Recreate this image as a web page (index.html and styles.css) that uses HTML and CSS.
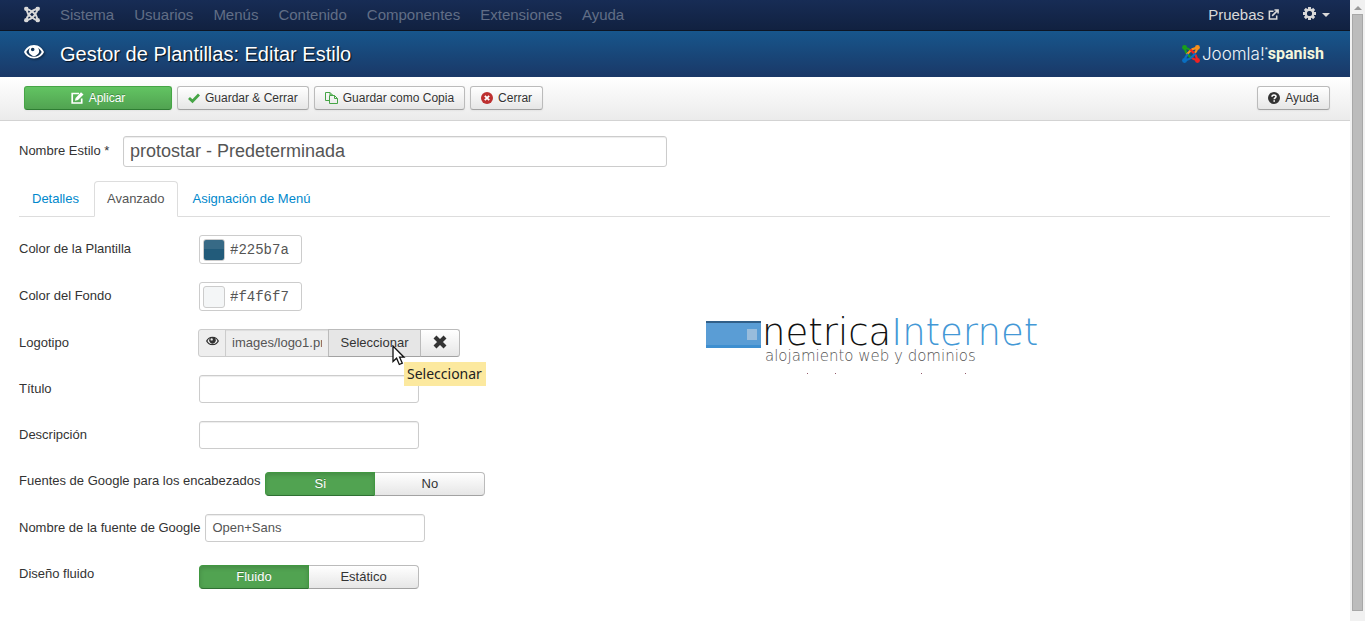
FILE: index.html
```html
<!DOCTYPE html>
<html lang="es">
<head>
<meta charset="utf-8">
<title>Gestor de Plantillas: Editar Estilo</title>
<link rel="stylesheet" href="styles.css">
</head>
<body>
<svg class="defs" aria-hidden="true">
  <symbol id="arm" viewBox="0 0 24 24">
    <circle cx="3.4" cy="3.4" r="3.3" fill="currentColor"/>
    <path d="M3.500 3.500C5 8 4.500 10 7.500 12.500L13 18M4 4C8.500 4 9.500 5.500 12 8" fill="none" stroke="currentColor" stroke-width="2.900"/>
  </symbol>
  <symbol id="eye" viewBox="0 0 20 14">
    <path fill="currentColor" fill-rule="evenodd" d="M10 0C5 0 1.500 3.500 0 7c1.500 3.500 5 6.500 10 6.500S18.500 10.500 20 7C18.500 3.500 15 0 10 0zM10 11.800C6.300 11.800 3.700 9.800 2.300 7 3.200 5.200 4.500 3.700 6 2.900a5 5 0 1 0 8 0c1.500.8 2.800 2.300 3.700 4.100C16.300 9.800 13.700 11.800 10 11.800zM8.700 2.700a1.800 1.800 0 1 1 0 3.600 1.800 1.800 0 0 1 0-3.600z"/>
  </symbol>
</svg>
<div class="window">
  <div class="page">
    <nav class="navbar">
      <a class="brand" href="#" aria-label="Joomla">
        <svg width="17" height="17" viewBox="0 0 24 24"><use href="#arm"/><use href="#arm" transform="rotate(90 12 12)"/><use href="#arm" transform="rotate(180 12 12)"/><use href="#arm" transform="rotate(270 12 12)"/></svg>
      </a>
      <a href="#">Sistema</a><a href="#">Usuarios</a><a href="#">Menús</a><a href="#">Contenido</a><a href="#">Componentes</a><a href="#">Extensiones</a><a href="#">Ayuda</a>
      <a class="site" href="#">Pruebas
        <svg width="11" height="11" viewBox="0 0 12 12" fill="none" stroke="currentColor" stroke-width="1.700"><path d="M6 2.500H1.500v8.500h8V7M4.500 7.500L10.500 1.500M7 1h4v4"/></svg>
      </a>
      <button class="gear" aria-label="Opciones">
        <svg width="13" height="13" viewBox="0 0 14 14"><circle cx="7" cy="7" r="4" fill="none" stroke="currentColor" stroke-width="2.600"/><path d="M7 0v3M7 11v3M0 7h3M11 7h3M2 2l2 2M10 10l2 2M12 2l-2 2M4 10l-2 2" stroke="currentColor" stroke-width="3.200"/><circle cx="7" cy="7" r="2.500" fill="#142748"/></svg>
        <span class="caret"></span>
      </button>
    </nav>
    <header class="header">
      <svg class="head-eye" width="20" height="14"><use href="#eye"/></svg>
      <h1>Gestor de Plantillas: Editar Estilo</h1>
      <a class="logo" href="#">
        <svg width="18" height="18" viewBox="0 0 24 24"><g color="#1aa01a"><use href="#arm"/></g><g color="#f9901c"><use href="#arm" transform="rotate(90 12 12)"/></g><g color="#f02222"><use href="#arm" transform="rotate(180 12 12)"/></g><g color="#0a6fc2"><use href="#arm" transform="rotate(270 12 12)"/></g></svg>
        <span class="logo-name">Joomla!</span><sup>*</sup><b>spanish</b>
      </a>
    </header>
    <div class="toolbar">
      <button class="btn success"><svg width="13" height="12" viewBox="0 0 13 12"><path d="M8 1.500H1.200v9.500h9.500V6.500" fill="none" stroke="currentColor" stroke-width="1.700"/><path d="M4 8.700l.6-2.700L10 .3 12.500 2.500 7 8z" fill="currentColor"/></svg>Aplicar</button>
      <button class="btn"><svg class="green" width="12" height="12" viewBox="0 0 12 12"><path d="M1 6l3.500 3.300L11 2.500" fill="none" stroke="currentColor" stroke-width="2.800"/></svg>Guardar &amp; Cerrar</button>
      <button class="btn"><svg class="green" width="13" height="12" viewBox="0 0 13 12" fill="none" stroke="currentColor"><path d="M4.500 8.500h-4v-8h4.500l2.500 2.500v1M5 .5v2.500h2.500M4.500 3.500h5l3 3v5h-8zM9.500 3.500v3h3"/></svg>Guardar como Copia</button>
      <button class="btn"><svg class="red" width="12" height="12" viewBox="0 0 12 12"><circle cx="6" cy="6" r="6" fill="currentColor"/><path d="M3.800 3.800l4.400 4.400M8.200 3.800L3.800 8.200" stroke="#fff" stroke-width="1.800"/></svg>Cerrar</button>
      <button class="btn help"><svg width="12" height="12" viewBox="0 0 12 12"><circle cx="6" cy="6" r="6" fill="currentColor"/><path d="M4 4.700C4 2.400 8 2.400 8 4.600 8 6 6.200 5.800 6.200 7.300M6.200 8.200v1.600" fill="none" stroke="#fff" stroke-width="1.600"/></svg>Ayuda</button>
    </div>
    <main class="content">
      <div class="title-row">
        <label for="name">Nombre Estilo *</label>
        <input id="name" class="big" type="text" value="protostar - Predeterminada">
      </div>
      <nav class="tabs"><a href="#">Detalles</a><a class="active" href="#">Avanzado</a><a href="#">Asignación de Menú</a></nav>
      <div class="columns">
        <form class="form">
          <div class="row"><label for="tpl">Color de la Plantilla</label>
            <div class="color"><span class="swatch blue"></span><input id="tpl" type="text" value="#225b7a"></div></div>
          <div class="row"><label for="bg">Color del Fondo</label>
            <div class="color"><span class="swatch pale"></span><input id="bg" type="text" value="#f4f6f7"></div></div>
          <div class="row"><label for="logo">Logotipo</label>
            <div class="group">
              <span class="addon"><svg width="13" height="10" viewBox="0 0 20 14"><use href="#eye"/></svg></span>
              <input id="logo" type="text" value="images/logo1.png" readonly>
              <button class="select" type="button">Seleccionar
                <svg class="pointer" width="14" height="21" viewBox="0 0 14 21"><path d="M1 1v15.500l3.600-3.300 2.700 6.300 3-1.300-2.700-6H12z" fill="#fff" stroke="#111" stroke-width="1.300"/></svg>
                <span class="tip" role="tooltip">Seleccionar</span>
              </button>
              <button class="clear" type="button" aria-label="Limpiar"><svg width="14" height="14" viewBox="0 0 14 14"><path d="M2 2l10 10M12 2L2 12" stroke="currentColor" stroke-width="4.200"/></svg></button>
            </div></div>
          <div class="row"><label for="title">Título</label><input id="title" class="text" type="text"></div>
          <div class="row"><label for="desc">Descripción</label><input id="desc" class="text" type="text"></div>
          <div class="row"><span class="label" id="gf">Fuentes de Google para los encabezados</span>
            <div class="toggle" role="radiogroup" aria-labelledby="gf"><label><input type="radio" name="gf" checked>Si</label><label><input type="radio" name="gf">No</label></div></div>
          <div class="row"><label for="font">Nombre de la fuente de Google</label><input id="font" class="text" type="text" value="Open+Sans"></div>
          <div class="row"><span class="label" id="fl">Diseño fluido</span>
            <div class="toggle" role="radiogroup" aria-labelledby="fl"><label><input type="radio" name="fl" checked>Fluido</label><label><input type="radio" name="fl">Estático</label></div></div>
        </form>
        <aside class="preview">
          <svg width="340" height="70" viewBox="0 -10 340 70">
            <path fill="#5a9dd5" d="M0 6h55v27H0z"/><path fill="#315f88" d="M0 6h55v2H0z"/><path fill="#3e8fd0" d="M0 30h55v3H0z"/><path fill="#98bcdc" d="M41 14h10v11H41z"/>
            <text class="mark" x="56" y="30">netrica<tspan class="mark-blue">Internet</tspan></text>
            <text class="slogan" x="59" y="46">alojamiento web y dominios</text>
            <path fill="#945a6b" d="M101 58h1v1h-1zM129 58h1v1h-1zM215 58h1v1h-1zM259 58h1v1h-1z"/>
          </svg>
        </aside>
      </div>
    </main>
  </div>
  <div class="scrollbar" aria-hidden="true"><span class="up"></span><span class="thumb"></span></div>
</div>
</body>
</html>
```
FILE: styles.css
```css
* { box-sizing: border-box; }
body { margin: 0; background: #fff; color: #333; font: 13px/18px "Liberation Sans", Arial, sans-serif; }
button, input { font: inherit; color: inherit; }
a { text-decoration: none; }
.defs { position: absolute; width: 0; height: 0; }
.window { display: flex; min-height: 100vh; }
.page { flex: 1; min-width: 0; }

.navbar { display: flex; align-items: center; gap: 20px; height: 31px; padding: 0 20px 1px 24px; background: linear-gradient(#172c55, #112140); border-bottom: 1px solid #0d1524; font-size: 15px; }
.navbar a { color: #616e86; }
.navbar .brand { display: flex; width: 16px; color: #d9d9d9; }
.navbar .site { display: flex; align-items: center; gap: 4px; margin-left: auto; color: #d9d9d9; }
.gear { display: flex; align-items: center; gap: 6px; padding: 0; margin-left: 4px; border: 0; background: none; color: #d9d9d9; }
.gear svg { margin-bottom: 3px; }
.caret { border: 4px solid transparent; border-top-color: #d9d9d9; border-bottom: 0; }

.header { display: flex; align-items: center; height: 46px; padding: 0 26px 0 24px; background: linear-gradient(#17568c, #1a3867); color: #fff; }
.head-eye { margin: 0 16px 4px 0; filter: drop-shadow(1px 1px 1px #0008); }
h1 { margin: 0; font-size: 20px; font-weight: 400; line-height: 36px; text-shadow: 1px 1px 1px #000c; }
.logo { display: flex; align-items: center; margin-left: auto; color: #eef3f8; }
.logo-name { margin-left: 2px; font: 300 17px/18px Inter, Lato, sans-serif; }
.logo sup { font-size: 8px; line-height: 8px; margin-bottom: 8px; }
.logo b { color: #f4f6dc; font: 700 16px/18px Roboto, "Liberation Sans", sans-serif; }

.toolbar { display: flex; align-items: center; gap: 5px; height: 44px; padding: 0 20px 2px 24px; background: linear-gradient(#fff, #ebebeb); border-bottom: 1px solid #d3d3d3; }
.btn { display: flex; align-items: center; justify-content: center; gap: 5px; height: 24px; padding: 0 10px; border: 1px solid #bbb; border-bottom-color: #a2a2a2; border-radius: 3px; background: linear-gradient(#fff, #e6e6e6); font-size: 12px; box-shadow: 0 1px 2px #0000000d; text-shadow: 0 1px 1px #ffffffbf; }
.success { width: 148px; border-color: #46a546 #46a546 #2e7d32; background: linear-gradient(#62c462, #51a351); color: #fff; text-shadow: 0 -1px 0 #00000040; }
.help { margin-left: auto; }
.green { color: #46a546; }
.red { color: #bd2f2f; }

.content { padding: 15px 20px 0 19px; }
.title-row { display: flex; align-items: flex-start; }
.title-row label { width: 104px; padding-top: 6px; }
.content input { border: 1px solid #ccc; border-radius: 3px; background: #fff; color: #555; outline: 0; box-shadow: inset 0 1px 1px #00000013; }
.content .big { width: 544px; height: 31px; padding: 0 6px; font-size: 18px; }
.tabs { display: flex; gap: 2px; margin: 14px 0 18px; border-bottom: 1px solid #ddd; }
.tabs a { padding: 8px 12px; margin-bottom: -1px; border: 1px solid transparent; border-radius: 4px 4px 0 0; color: #08c; }
.tabs .active { border-color: #ddd #ddd #fff; background: #fff; color: #555; }

.columns { display: grid; grid-template-columns: 11fr 10fr; }
.row { display: flex; align-items: flex-start; margin-bottom: 18px; }
.row > label, .label { min-width: 180px; padding: 5px 5px 0 0; white-space: nowrap; }
.content .text { width: 220px; height: 28px; padding: 0 6px 1px; }
.color { display: flex; align-items: center; width: 103px; height: 29px; padding: 0 3px; border: 1px solid #ccc; border-radius: 3px; }
.swatch { width: 22px; height: 22px; border: 1px solid #ccc; border-radius: 3px; }
.blue { background: linear-gradient(#376a86 45%, #225b7a 45%); }
.pale { background: #f4f6f7; }
.content .color input { width: 70px; padding: 0 0 0 5px; border: 0; box-shadow: none; font: 14px/20px "Liberation Mono", monospace; }
.group { display: flex; height: 28px; margin-left: -1px; }
.addon { display: flex; align-items: center; justify-content: center; width: 28px; padding-bottom: 4px; border: 1px solid #ccc; border-radius: 3px 0 0 3px; background: #eee; }
.content .group input { width: 104px; margin-left: -1px; padding: 0 6px; border-radius: 0; background: #eee; }
.select, .clear { margin-left: -1px; border: 1px solid #bbb; border-bottom-color: #a2a2a2; }
.select { position: relative; width: 93px; padding: 0; background: #e6e6e6; }
.clear { display: flex; align-items: center; justify-content: center; width: 40px; padding: 0 0 3px; border-radius: 0 3px 3px 0; background: linear-gradient(#fff, #e6e6e6); }
.pointer { position: absolute; left: 63px; top: 15px; z-index: 2; }
.tip { position: absolute; left: 75px; top: 32px; z-index: 1; padding: 0 4px 0 3px; background: #fce99f; color: #222; font: 14px/24px "Noto Sans", sans-serif; }
.toggle { display: flex; margin-top: 5px; }
.toggle label { position: relative; width: 110px; height: 24px; border: 1px solid #bbb; border-bottom-color: #a2a2a2; border-radius: 0 4px 4px 0; background: linear-gradient(#fff, #e6e6e6); text-align: center; line-height: 22px; }
.toggle label:first-child { border-radius: 4px 0 0 4px; }
.toggle label + label { border-left: 0; }
.toggle label:has(:checked) { border-color: #409740 #409740 #2f7033; background: #51a351; color: #fff; box-shadow: inset 0 2px 4px #00000026; text-shadow: 0 -1px 0 #00000040; }
.content .toggle input { position: absolute; opacity: 0; margin: 0; }
.preview { padding-top: 70px; }
.preview svg { display: block; }
.mark { font: 200 37px "DejaVu Sans Light", "DejaVu Sans", sans-serif; fill: #111; }
.mark-blue { fill: #4398d6; }
.slogan { font: 200 15px "DejaVu Sans Light", "DejaVu Sans", sans-serif; fill: #555; }

.scrollbar { display: flex; flex-direction: column; align-items: center; width: 15px; padding: 6px 0 10px; background: #f1f1f1; }
.up { border: 4px solid transparent; border-top: 0; border-bottom-color: #999; }
.thumb { flex: 1; width: 11px; margin-top: 4px; border: 1px solid #a8a8a8; background: #bcbcbc; }
```
